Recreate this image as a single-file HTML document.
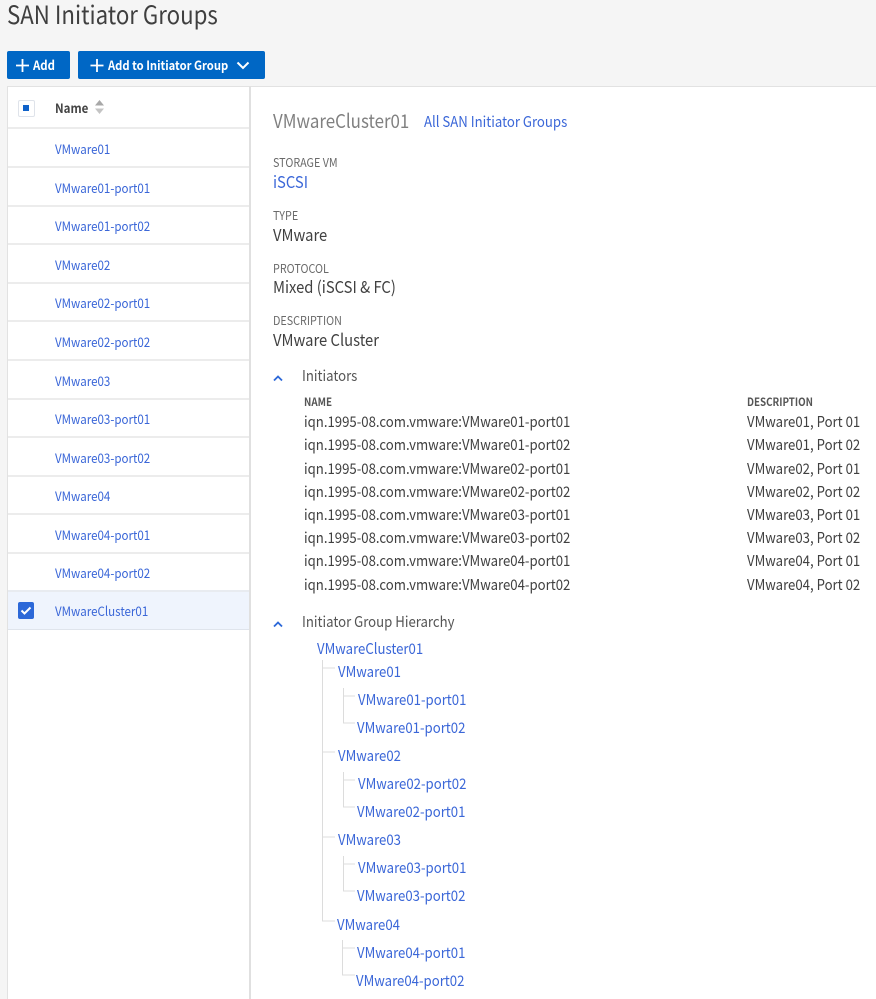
<!DOCTYPE html>
<html><head><meta charset="utf-8"><style>
html,body{margin:0;padding:0;width:876px;height:999px;overflow:hidden;background:#f5f5f5}
body{position:relative;font-family:"Noto Sans CJK JP","Noto Sans CJK SC","Liberation Sans",sans-serif;color:#404040}
.t{position:absolute;white-space:nowrap;line-height:20px;height:20px;transform:scaleX(.89);transform-origin:0 50%}
.l{color:#3b67d8}
.r{font-size:13px}
.d{font-size:16.600px}
.c{font-size:12.100px;color:#6a6a6a}
.b{position:absolute;background:#0067c5;border-radius:2px;height:28px;top:51px}
.ln{position:absolute;background:#dcdcdc}
.sep{position:absolute;left:8px;width:241px;height:2px;background:#ececec}
.h{font-size:11px;font-weight:700;color:#555}
.i{font-size:14.800px}
.tr{font-size:14.800px}
</style></head><body>
<div class="t" style="left:7px;top:3px;font-size:25px;line-height:22px;height:22px;color:#3f3f3f">SAN Initiator Groups</div>

<div class="b" style="left:7px;width:63px"></div>
<div class="b" style="left:78px;width:187px"></div>
<svg style="position:absolute;left:0;top:50px" width="280" height="30" fill="none" stroke="#fff" stroke-width="1.800"><path d="M22.500 9v13M16 15.500h13M97 9v13M90.500 15.500h13"/><path d="M237.500 12.500l5.500 5.500 5.500-5.500" stroke-width="2"/></svg>
<div class="t" style="left:33px;top:55px;font-size:12.800px;font-weight:700;color:#fff">Add</div>
<div class="t" style="left:108px;top:55px;font-size:12.600px;font-weight:700;color:#fff">Add to Initiator Group</div>

<div style="position:absolute;left:7px;top:86px;width:869px;height:913px;background:#fff"></div>
<div style="position:absolute;left:7px;top:86px;width:869px;height:1px;background:#e2e2e2"></div>
<div style="position:absolute;left:7px;top:86px;width:1px;height:913px;background:#e2e2e2"></div>
<div style="position:absolute;left:249px;top:86px;width:2px;height:913px;background:#e0e0e0"></div>

<div style="position:absolute;left:18px;top:100px;width:15px;height:15px;border:1px solid #dfe3ea;border-radius:2px;background:#fff"></div>
<div style="position:absolute;left:23px;top:105px;width:6px;height:6px;background:#0f62c9"></div>
<div class="t" style="left:55px;top:98px;font-size:13px;font-weight:700;color:#444">Name</div>
<svg style="position:absolute;left:94px;top:99px" width="12" height="16"><path d="M1 6.500L5.500 1 10 6.500z" fill="#a8a8a8"/><path d="M1 9.500L5.500 15 10 9.500z" fill="#c4c4c4"/></svg>

<div class="sep" style="top:127px"></div>
<div class="sep" style="top:166px"></div>
<div class="sep" style="top:205px"></div>
<div class="sep" style="top:243px"></div>
<div class="sep" style="top:282px"></div>
<div class="sep" style="top:320px"></div>
<div class="sep" style="top:359px"></div>
<div class="sep" style="top:398px"></div>
<div class="sep" style="top:436px"></div>
<div class="sep" style="top:475px"></div>
<div class="sep" style="top:513px"></div>
<div class="sep" style="top:552px"></div>
<div style="position:absolute;left:8px;top:590px;width:241px;height:40px;background:#eff4fd;border-top:2px solid #e8ebf0;border-bottom:1px solid #dfe4ec;box-sizing:border-box"></div>

<div class="t l r" style="left:55px;top:139px">VMware01</div>
<div class="t l r" style="left:55px;top:178px">VMware01-port01</div>
<div class="t l r" style="left:55px;top:216px">VMware01-port02</div>
<div class="t l r" style="left:55px;top:255px">VMware02</div>
<div class="t l r" style="left:55px;top:293px">VMware02-port01</div>
<div class="t l r" style="left:55px;top:332px">VMware02-port02</div>
<div class="t l r" style="left:55px;top:371px">VMware03</div>
<div class="t l r" style="left:55px;top:409px">VMware03-port01</div>
<div class="t l r" style="left:55px;top:448px">VMware03-port02</div>
<div class="t l r" style="left:55px;top:486px">VMware04</div>
<div class="t l r" style="left:55px;top:525px">VMware04-port01</div>
<div class="t l r" style="left:55px;top:563px">VMware04-port02</div>
<div class="t l r" style="left:55px;top:601px">VMwareCluster01</div>

<div style="position:absolute;left:18px;top:602px;width:16px;height:17px;background:#2c68d8;border-radius:2px"></div>
<svg style="position:absolute;left:18px;top:602px" width="16" height="17" fill="none" stroke="#fff" stroke-width="2"><path d="M3.500 8.500l3 3 6-6"/></svg>

<div class="t" style="left:273px;top:111px;font-size:19px;color:#808080">VMwareCluster01</div>
<div class="t l" style="left:424px;top:112px;font-size:14.800px">All SAN Initiator Groups</div>

<div class="t c" style="left:273px;top:153px">STORAGE VM</div>
<div class="t l d" style="left:273px;top:171px">iSCSI</div>
<div class="t c" style="left:273px;top:206px">TYPE</div>
<div class="t d" style="left:273px;top:224px">VMware</div>
<div class="t c" style="left:273px;top:259px">PROTOCOL</div>
<div class="t d" style="left:273px;top:276px">Mixed (iSCSI &amp; FC)</div>
<div class="t c" style="left:273px;top:311px">DESCRIPTION</div>
<div class="t d" style="left:273px;top:329px">VMware Cluster</div>

<svg style="position:absolute;left:270px;top:370px" width="20" height="270" fill="none" stroke="#2c68d8" stroke-width="1.800"><path d="M4 10.500l4-4 4 4M4 256.500l4-4 4 4"/></svg>
<div class="t" style="left:302px;top:366px;font-size:14.800px;color:#555">Initiators</div>
<div class="t" style="left:302px;top:612px;font-size:14.800px;color:#555">Initiator Group Hierarchy</div>

<div class="t h" style="left:304px;top:392px">NAME</div>
<div class="t h" style="left:747px;top:392px">DESCRIPTION</div>
<div class="t i" style="left:304px;top:412px">iqn.1995-08.com.vmware:VMware01-port01</div>
<div class="t i" style="left:304px;top:435px">iqn.1995-08.com.vmware:VMware01-port02</div>
<div class="t i" style="left:304px;top:459px">iqn.1995-08.com.vmware:VMware02-port01</div>
<div class="t i" style="left:304px;top:482px">iqn.1995-08.com.vmware:VMware02-port02</div>
<div class="t i" style="left:304px;top:505px">iqn.1995-08.com.vmware:VMware03-port01</div>
<div class="t i" style="left:304px;top:528px">iqn.1995-08.com.vmware:VMware03-port02</div>
<div class="t i" style="left:304px;top:551px">iqn.1995-08.com.vmware:VMware04-port01</div>
<div class="t i" style="left:304px;top:575px">iqn.1995-08.com.vmware:VMware04-port02</div>
<div class="t i" style="left:747px;top:412px">VMware01, Port 01</div>
<div class="t i" style="left:747px;top:435px">VMware01, Port 02</div>
<div class="t i" style="left:747px;top:459px">VMware02, Port 01</div>
<div class="t i" style="left:747px;top:482px">VMware02, Port 02</div>
<div class="t i" style="left:747px;top:505px">VMware03, Port 01</div>
<div class="t i" style="left:747px;top:528px">VMware03, Port 02</div>
<div class="t i" style="left:747px;top:551px">VMware04, Port 01</div>
<div class="t i" style="left:747px;top:575px">VMware04, Port 02</div>

<svg style="position:absolute;left:300px;top:650px" width="70" height="340" fill="none" stroke="#dcdcdc" stroke-width="1"><path d="M22.500 10V271H35M22.500 18H35M22.500 102H35M22.500 187H35"/><path d="M43.500 38V73H55M43.500 46H55M43.500 122V157H55M43.500 130H55M43.500 206V241H55M43.500 214H55M42.500 290V325H55M42.500 298H55"/></svg>

<div class="t l tr" style="left:317px;top:639px">VMwareCluster01</div>
<div class="t l tr" style="left:338px;top:662px">VMware01</div>
<div class="t l tr" style="left:358px;top:690px">VMware01-port01</div>
<div class="t l tr" style="left:357px;top:718px">VMware01-port02</div>
<div class="t l tr" style="left:338px;top:746px">VMware02</div>
<div class="t l tr" style="left:358px;top:774px">VMware02-port02</div>
<div class="t l tr" style="left:357px;top:802px">VMware02-port01</div>
<div class="t l tr" style="left:338px;top:830px">VMware03</div>
<div class="t l tr" style="left:358px;top:858px">VMware03-port01</div>
<div class="t l tr" style="left:357px;top:886px">VMware03-port02</div>
<div class="t l tr" style="left:337px;top:915px">VMware04</div>
<div class="t l tr" style="left:357px;top:943px">VMware04-port01</div>
<div class="t l tr" style="left:356px;top:971px">VMware04-port02</div>
</body></html>
